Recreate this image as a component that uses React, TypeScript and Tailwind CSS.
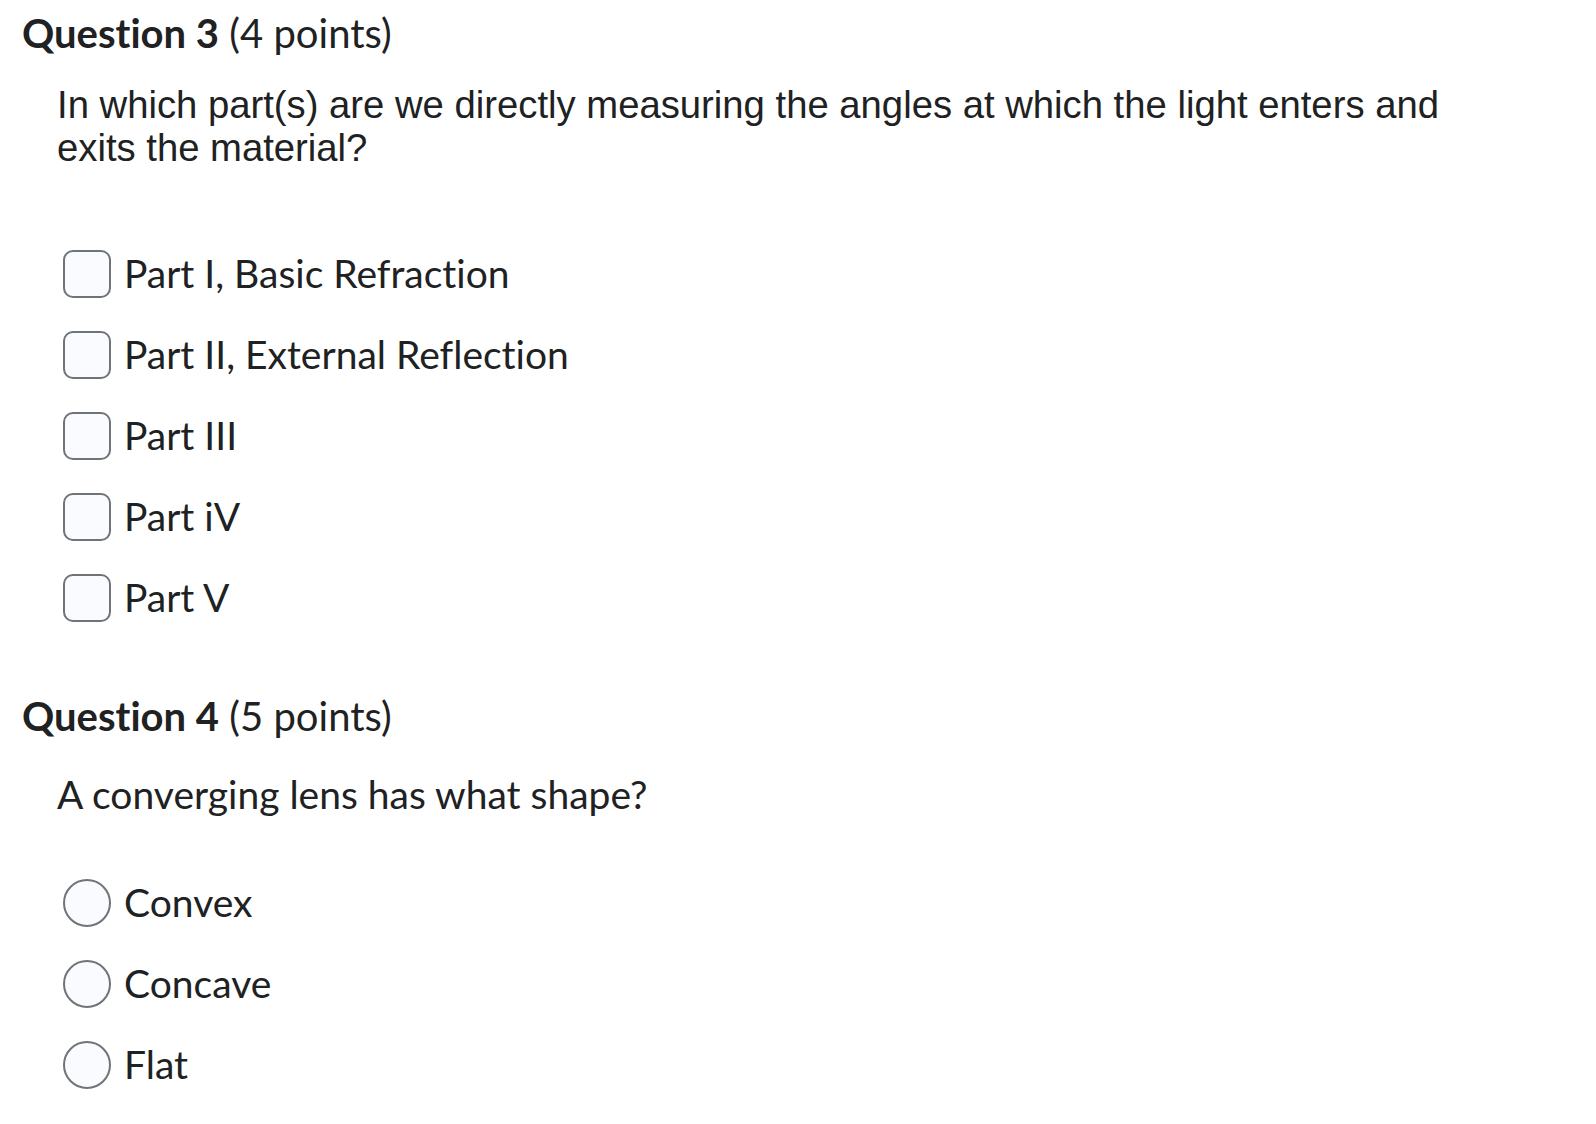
import React from "react";

function Checkbox() {
  return (
    <span className="inline-block w-[48px] h-[48px] shrink-0 rounded-[10px] border-[2.5px] border-[#6e7477] bg-[#f9fbff]" />
  );
}

function Radio() {
  return (
    <span className="inline-block w-[48px] h-[48px] shrink-0 rounded-full border-[2.5px] border-[#6e7477] bg-[#f9fbff]" />
  );
}

function Option({ kind, label }: { kind: "check" | "radio"; label: string }) {
  return (
    <div className="flex items-center h-[48px] ml-[41px] gap-[13px]">
      {kind === "check" ? <Checkbox /> : <Radio />}
      <span className="text-[39px] leading-none text-[#202122] font-['Lato',sans-serif] [font-variant-ligatures:no-common-ligatures] -mt-[2px]">
        {label}
      </span>
    </div>
  );
}

export default function App() {
  return (
    <div className="w-[1596px] h-[1124px] bg-white text-[#202122] overflow-hidden pl-[22px] pt-[9px]">
      <h2 className="text-[40px] leading-[48px] font-['Lato',sans-serif] [font-variant-ligatures:no-common-ligatures]">
        <span className="font-bold">Question 3</span> <span className="font-normal">(4 points)</span>
      </h2>
      <p className="mt-[26px] ml-[35px] text-[38.25px] leading-[43px] font-['Liberation_Sans',Arial,sans-serif] max-w-[1440px]">
        In which part(s) are we directly measuring the angles at which the light enters and exits the material?
      </p>
      <div className="mt-[81px] flex flex-col gap-[33px]">
        <Option kind="check" label="Part I, Basic Refraction" />
        <Option kind="check" label="Part II, External Reflection" />
        <Option kind="check" label="Part III" />
        <Option kind="check" label="Part iV" />
        <Option kind="check" label="Part V" />
      </div>
      <h2 className="mt-[70px] text-[40px] leading-[48px] font-['Lato',sans-serif] [font-variant-ligatures:no-common-ligatures]">
        <span className="font-bold">Question 4</span> <span className="font-normal">(5 points)</span>
      </h2>
      <p className="mt-[31px] ml-[35px] text-[39px] leading-[47px] font-['Lato',sans-serif]">
        A converging lens has what shape?
      </p>
      <div className="mt-[61px] flex flex-col gap-[33px]">
        <Option kind="radio" label="Convex" />
        <Option kind="radio" label="Concave" />
        <Option kind="radio" label="Flat" />
      </div>
    </div>
  );
}
